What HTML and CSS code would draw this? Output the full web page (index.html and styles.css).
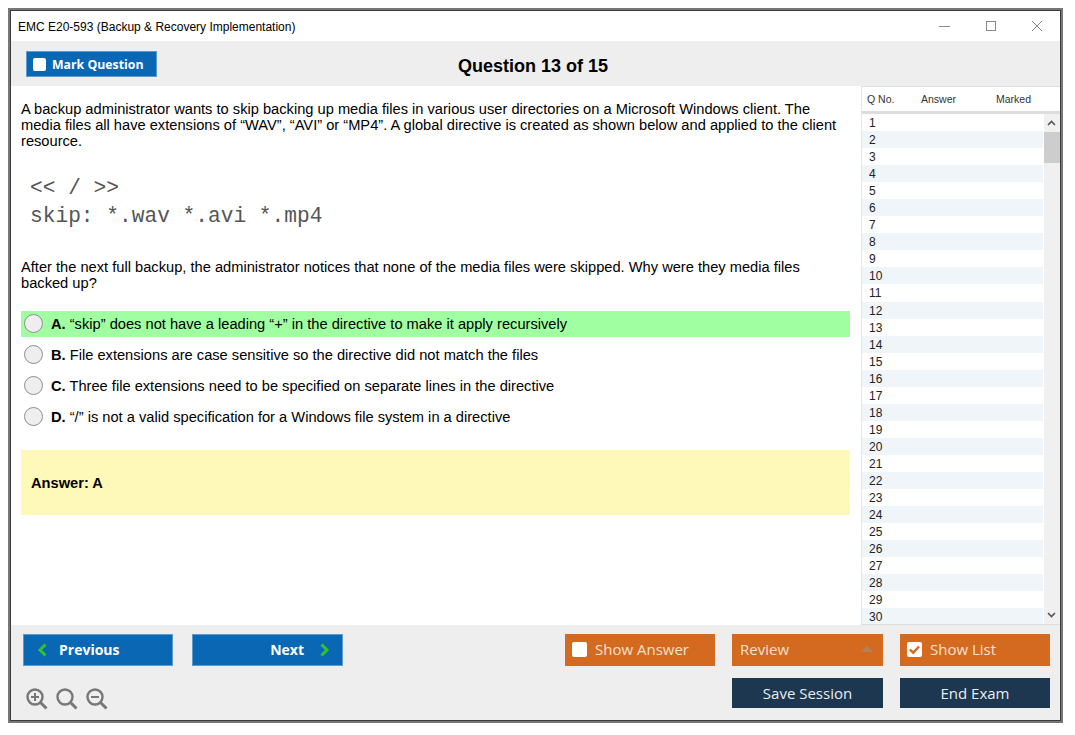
FILE: index.html
```html
<!DOCTYPE html>
<html lang="en">
<head>
<meta charset="utf-8">
<title>EMC E20-593</title>
<link rel="stylesheet" href="styles.css">
</head>
<body>
<div class="frame">
<div class="window">
  <header class="titlebar">
    <span class="title">EMC E20-593 (Backup &amp; Recovery Implementation)</span>
    <div class="winctl">
      <svg width="12" height="12" viewBox="0 0 12 12"><path d="M0 6.5H11" stroke="#8a8a8a" fill="none"/></svg>
      <svg width="12" height="12" viewBox="0 0 12 12"><rect x="1.5" y="1.5" width="9" height="9" stroke="#8a8a8a" fill="none"/></svg>
      <svg width="12" height="12" viewBox="0 0 12 12"><path d="M1 1L11 11M11 1L1 11" stroke="#8a8a8a" fill="none"/></svg>
    </div>
  </header>
  <div class="toolbar">
    <button class="mark"><span class="box"></span>Mark Question</button>
    <h1 class="qtitle">Question 13 of 15</h1>
  </div>
  <div class="middle">
    <main class="question">
      <p class="stem">A backup administrator wants to skip backing up media files in various user directories on a Microsoft Windows client. The media files all have extensions of “WAV”, “AVI” or “MP4”. A global directive is created as shown below and applied to the client resource.</p>
      <pre class="code">&lt;&lt; / &gt;&gt;
skip: *.wav *.avi *.mp4</pre>
      <p class="stem follow">After the next full backup, the administrator notices that none of the media files were skipped. Why were they media files backed up?</p>
      <ul class="options">
        <li class="option correct"><span class="radio"></span><b>A.</b> “skip” does not have a leading “+” in the directive to make it apply recursively</li>
        <li class="option"><span class="radio"></span><b>B.</b> File extensions are case sensitive so the directive did not match the files</li>
        <li class="option"><span class="radio"></span><b>C.</b> Three file extensions need to be specified on separate lines in the directive</li>
        <li class="option"><span class="radio"></span><b>D.</b> “/” is not a valid specification for a Windows file system in a directive</li>
      </ul>
      <div class="answer">Answer: A</div>
    </main>
    <aside class="side">
      <div class="side-head"><span class="c1">Q No.</span><span class="c2">Answer</span><span class="c3">Marked</span></div>
      <div class="side-body">
        <ol class="rows">
          <li>1</li><li>2</li><li>3</li><li>4</li><li>5</li><li>6</li><li>7</li><li>8</li><li>9</li><li>10</li>
          <li>11</li><li>12</li><li>13</li><li>14</li><li>15</li><li>16</li><li>17</li><li>18</li><li>19</li><li>20</li>
          <li>21</li><li>22</li><li>23</li><li>24</li><li>25</li><li>26</li><li>27</li><li>28</li><li>29</li><li>30</li>
        </ol>
        <div class="scroll">
          <svg class="arrow" width="15" height="18" viewBox="0 0 15 18"><path d="M4 11L7.5 7.5L11 11" stroke="#555" stroke-width="1.6" fill="none"/></svg>
          <div class="thumb"></div>
          <svg class="arrow bottom" width="15" height="18" viewBox="0 0 15 18"><path d="M4 7L7.5 10.5L11 7" stroke="#555" stroke-width="1.6" fill="none"/></svg>
        </div>
      </div>
    </aside>
  </div>
  <footer class="footer">
    <div class="left">
      <div class="nav">
        <button class="btn blue prev"><svg width="11" height="14" viewBox="0 0 11 14"><path d="M8.5 1.5L3 7L8.5 12.5" stroke="#2fc42f" stroke-width="3" fill="none"/></svg>Previous</button>
        <button class="btn blue next">Next<svg width="11" height="14" viewBox="0 0 11 14"><path d="M2.5 1.5L8 7L2.5 12.5" stroke="#2fc42f" stroke-width="3" fill="none"/></svg></button>
      </div>
      <div class="zoom">
        <svg width="22" height="22" viewBox="0 0 22 22"><circle cx="9" cy="9" r="7.5" stroke="#777" stroke-width="2.4" fill="none"/><path d="M14.5 14.5L20.5 20.5" stroke="#777" stroke-width="3" fill="none"/><path d="M5 9H13M9 5V13" stroke="#777" stroke-width="2" fill="none"/></svg>
        <svg width="22" height="22" viewBox="0 0 22 22"><circle cx="9" cy="9" r="7.5" stroke="#777" stroke-width="2.4" fill="none"/><path d="M14.5 14.5L20.5 20.5" stroke="#777" stroke-width="3" fill="none"/></svg>
        <svg width="22" height="22" viewBox="0 0 22 22"><circle cx="9" cy="9" r="7.5" stroke="#777" stroke-width="2.4" fill="none"/><path d="M14.5 14.5L20.5 20.5" stroke="#777" stroke-width="3" fill="none"/><path d="M5 9H13" stroke="#777" stroke-width="2" fill="none"/></svg>
      </div>
    </div>
    <div class="right">
      <button class="btn orange"><span class="box large"></span>Show Answer</button>
      <button class="btn orange review">Review<svg width="12" height="6" viewBox="0 0 12 6"><path d="M0 6L6 0L12 6Z" fill="#b0815e"/></svg></button>
      <button class="btn orange"><span class="box large"><svg width="15" height="15" viewBox="0 0 15 15"><path d="M3 7.5L6.2 10.7L12 4.5" stroke="#d2691f" stroke-width="2.4" fill="none"/></svg></span>Show List</button>
      <span></span>
      <button class="btn navy">Save Session</button>
      <button class="btn navy">End Exam</button>
    </div>
  </footer>
</div>
</div>
</body>
</html>
```
FILE: styles.css
```css
* { box-sizing: border-box; }
html, body { margin: 0; padding: 0; background: #fff; }
body { padding: 8px 0 0 8px; font-family: "Liberation Sans", Arial, sans-serif; color: #000; }
button { font: inherit; border: 0; margin: 0; padding: 0; }
.frame { width: 1055px; height: 715px; border: 2px solid #777; }
.window {
  height: 100%;
  border: 1px solid #3c3c3c;
  display: flex; flex-direction: column;
  background: #fff;
}
.titlebar { height: 30px; flex: none; display: flex; align-items: center; justify-content: space-between; padding: 2px 17px 0 7px; }
.title { font-size: 12px; }
.winctl { display: flex; gap: 34px; margin-top: -3px; }
.toolbar { height: 45px; flex: none; background: #eee; display: flex; align-items: center; position: relative; padding-left: 15px; }
.mark { width: 131px; height: 26px; background: #0a67b3; color: #fff; font-family: "Open Sans", sans-serif; font-weight: 700; font-size: 12.3px; display: flex; align-items: center; gap: 6px; padding-left: 6px; margin-top: 1px; border: 1px solid #5b9bd0; }
.box { width: 13px; height: 13px; background: #fff; border-radius: 2px; display: block; flex: none; }
.box.large { width: 15px; height: 15px; }
.box svg { display: block; }
.qtitle { position: absolute; left: 0; right: 5px; top: 14px; margin: 0; text-align: center; font-size: 18px; line-height: 22px; font-weight: 700; }
.middle { height: 539px; flex: none; display: flex; min-height: 0; }
.question { width: 850px; flex: none; padding: 15px 11px 0 10px; }
.stem { margin: 0; font-size: 14.67px; line-height: 16px; }
.code { margin: 25px 0 0 9px; font-family: "Liberation Mono", monospace; font-size: 21.2px; line-height: 28px; color: #555; height: 65px; }
.stem.follow { margin-top: 20px; }
.options { list-style: none; margin: 20px 0 0; padding: 0; }
.option { height: 26px; margin-bottom: 5px; display: flex; align-items: center; font-size: 14.67px; white-space: pre; padding-left: 3px; }
.option.correct { background: #a0ffa0; }
.radio { width: 19px; height: 19px; border-radius: 50%; background: #eee; border: 1px solid #8f8f8f; margin: -2px 8px 0 0; flex: none; }
.answer { margin-top: 20px; height: 65px; background: #fff9b9; display: flex; align-items: center; padding-left: 10px; font-size: 14.67px; font-weight: 700; }
.side { width: 199px; flex: none; display: flex; flex-direction: column; border-left: 1px solid #e4e4e4; }
.side-head { height: 28px; flex: none; display: flex; align-items: center; font-size: 10.5px; color: #333; border-top: 1px solid #ddd; border-bottom: 3px solid #ddd; }
.c1 { margin-left: 5px; width: 54px; }
.c2 { width: 75px; }
.side-body { flex: 1; display: flex; min-height: 0; border-bottom: 1px solid #ddd; overflow: hidden; }
.rows { list-style: none; margin: 0; padding: 0; width: 181px; flex: none; }
.rows li { height: 17.05px; font-size: 12px; line-height: 19px; padding-left: 7px; color: #222; }
.rows li:nth-child(even) { background: #f0f5fa; }
.scroll { width: 16px; flex: none; margin-left: 1px; background: #f0f0f0; position: relative; }
.arrow { display: block; }
.thumb { background: #cdcdcd; height: 31px; }
.arrow.bottom { position: absolute; bottom: 0; left: 0; }
.footer { flex: 1; background: #eee; display: flex; justify-content: space-between; padding: 9px 10px 0 12px; min-height: 0; }
.nav { display: flex; gap: 19px; }
.zoom { display: flex; gap: 8px; margin-top: 22px; margin-left: 3px; }
.zoom svg { display: block; }
.btn { height: 32px; width: 150px; font-family: "Open Sans", sans-serif; color: #fff; display: flex; align-items: center; }
.blue { background: #0a67b3; border: 1px solid #5b9bd0; font-weight: 700; font-size: 14px; padding-bottom: 1px; }
.prev { gap: 11px; padding-left: 13px; }
.next { width: 151px; justify-content: flex-end; gap: 15px; padding-right: 12px; }
.right { display: grid; grid-template-columns: 150px 151px 150px; column-gap: 17px; grid-template-rows: 32px 30px; row-gap: 12px; align-content: start; }
.orange { width: 100%; background: #d36a1f; font-size: 15px; gap: 8px; padding: 0 0 2px 7px; color: #f3e0d0; }
.review { justify-content: space-between; padding: 0 10px 2px 8px; }
.navy { width: 100%; background: #1c374f; justify-content: center; font-size: 15px; height: 30px; padding-bottom: 1px; color: #e8edf2; }
```
